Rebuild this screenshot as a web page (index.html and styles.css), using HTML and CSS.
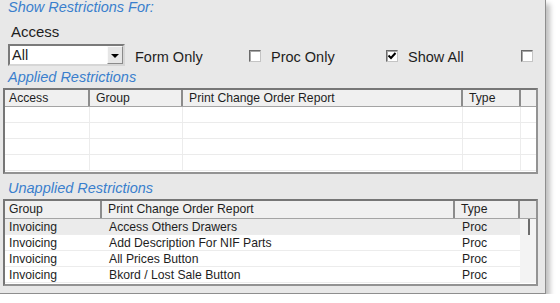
FILE: index.html
```html
<!DOCTYPE html>
<html lang="en">
<head>
    <meta charset="UTF-8">
    <title>Restrictions</title>
    <link rel="stylesheet" href="styles.css">
</head>
<body>
    <div class="panel">
        <div class="caption top">Show Restrictions For:</div>
        <div class="label">Access</div>
        <div class="options">
            <div class="combo">
                <span class="combo-text">All</span>
                <span class="combo-btn"><span class="arrow"></span></span>
            </div>
            <span class="opt first">Form Only</span>
            <span class="check"></span>
            <span class="opt">Proc Only</span>
            <span class="check">
                <svg width="10" height="10" viewBox="0 0 10 10"><path d="M1.5 4.5 L4 7 L8.5 2" fill="none" stroke="#000" stroke-width="2"/></svg>
            </span>
            <span class="opt wide">Show All</span>
            <span class="check"></span>
        </div>

        <div class="caption">Applied Restrictions</div>
        <div class="grid applied">
            <div class="row head">
                <div class="cell first">Access</div>
                <div class="cell">Group</div>
                <div class="cell">Print Change Order Report</div>
                <div class="cell">Type</div>
                <div class="cell last"></div>
            </div>
            <div class="body">
                <div class="row"><div class="cell"></div><div class="cell"></div><div class="cell"></div><div class="cell"></div><div class="cell last"></div></div>
                <div class="row"><div class="cell"></div><div class="cell"></div><div class="cell"></div><div class="cell"></div><div class="cell last"></div></div>
                <div class="row"><div class="cell"></div><div class="cell"></div><div class="cell"></div><div class="cell"></div><div class="cell last"></div></div>
                <div class="row"><div class="cell"></div><div class="cell"></div><div class="cell"></div><div class="cell"></div><div class="cell last"></div></div>
            </div>
        </div>

        <div class="caption second">Unapplied Restrictions</div>
        <div class="grid unapplied">
            <div class="row head">
                <div class="cell first">Group</div>
                <div class="cell">Print Change Order Report</div>
                <div class="cell">Type</div>
                <div class="cell blank"></div>
            </div>
            <div class="body">
                <div class="rows">
                    <div class="row sel"><div class="cell first">Invoicing</div><div class="cell">Access Others Drawers</div><div class="cell">Proc</div></div>
                    <div class="row"><div class="cell first">Invoicing</div><div class="cell">Add Description For NIF Parts</div><div class="cell">Proc</div></div>
                    <div class="row"><div class="cell first">Invoicing</div><div class="cell">All Prices Button</div><div class="cell">Proc</div></div>
                    <div class="row"><div class="cell first">Invoicing</div><div class="cell">Bkord / Lost Sale Button</div><div class="cell">Proc</div></div>
                </div>
                <div class="track"><div class="thumb"></div></div>
            </div>
        </div>
    </div>
</body>
</html>
```

FILE: styles.css
```css
body {
    margin: 0;
    background-color: #ffffff;
    font-family: 'Liberation Sans', Arial, sans-serif;
    color: #1e1e1e;
}

div.panel {
    width: 545px;
    height: 293px;
    overflow: hidden;
    background-color: #e8e8e8;
    border-right: 1px solid #8e8e8e;
    border-bottom: 1px solid #8e8e8e;
    box-shadow: 4px 4px 5px rgba(0, 0, 0, 0.25);
}

/* blue italic captions */
div.panel div.caption {
    font-size: 14.5px;
    line-height: 16px;
    font-style: italic;
    color: #3a7fcd;
    margin: 3px 0 0 8px;
}

div.panel div.caption.top {
    margin-top: -1px;
}

div.panel div.caption.second {
    margin-top: 6px;
}

div.panel div.label {
    font-size: 15px;
    line-height: 18px;
    margin: 8px 0 0 11px;
}

div.panel div.options {
    display: flex;
    align-items: center;
    height: 22px;
    margin-top: 3px;
    font-size: 14.5px;
}

div.options div.combo {
    display: flex;
    box-sizing: border-box;
    width: 117px;
    height: 22px;
    margin-left: 8px;
    background-color: #fff;
    border: 2px solid;
    border-color: #7a7a7a #d6d6d6 #d6d6d6 #7a7a7a;
}

div.options div.combo span.combo-text {
    flex: 1;
    padding-left: 2px;
    line-height: 18px;
}

div.options div.combo span.combo-btn {
    display: flex;
    align-items: center;
    justify-content: center;
    box-sizing: border-box;
    width: 16px;
    background-color: #e6e6e6;
    border: 1px solid;
    border-color: #fafafa #8a8a8a #8a8a8a #fafafa;
}

span.combo-btn span.arrow {
    width: 0;
    height: 0;
    border-left: 4px solid transparent;
    border-right: 4px solid transparent;
    border-top: 4px solid #000;
    margin-top: 1px;
}

div.options span.opt {
    width: 115px;
    margin-left: 10px;
    margin-top: 4px;
}

div.options span.opt.first {
    width: 114px;
}

div.options span.opt.wide {
    width: 113px;
}

div.options span.check {
    display: flex;
    align-items: center;
    justify-content: center;
    box-sizing: border-box;
    width: 12px;
    height: 12px;
    margin-top: 2px;
    background-color: #fff;
    border: 1px solid;
    border-color: #6a6a6a #c4c4c4 #c4c4c4 #6a6a6a;
    box-shadow: inset 1px 1px 0 #a8a8a8;
}

/* list grids */
div.grid {
    width: 535px;
    box-sizing: border-box;
    margin: 3px 0 0 3px;
    border: 2px solid #939393;
    border-top-color: #767676;
    border-left-color: #767676;
    background-color: #fff;
    font-size: 12.2px;
}

div.grid div.row {
    display: grid;
    box-sizing: border-box;
    height: 16px;
    line-height: 16px;
}

div.grid.applied div.row {
    grid-template-columns: 85px 93px 280px 58px 1fr;
}

div.grid.unapplied div.row {
    grid-template-columns: 97px 353px 65px 1fr;
}

div.grid.unapplied div.rows div.row {
    grid-template-columns: 97px 353px 65px;
}

div.grid div.cell {
    box-sizing: border-box;
    padding-left: 6px;
    white-space: nowrap;
    overflow: hidden;
}

div.grid div.row.head {
    height: 17px;
    background-color: #f0f0f0;
    border-bottom: 1px solid #a4a4a4;
}

div.grid.unapplied div.row.head {
    height: 18px;
    line-height: 17px;
}

div.grid div.row.head div.cell {
    border-right: 2px solid #8c8c8c;
}

div.grid div.row.head div.cell.first {
    padding-left: 4px;
}

div.grid div.row.head div.cell.last,
div.grid div.row.head div.cell.blank {
    border-right: none;
}

div.grid.unapplied div.row.head div.cell.blank {
    background-color: #e8e8e8;
}

div.grid div.body {
    padding-bottom: 1px;
}

div.grid.applied div.body div.row {
    border-bottom: 1px solid #ebebeb;
}

div.grid.applied div.body div.cell {
    border-right: 1px solid #ececec;
}

div.grid.applied div.body div.cell.last {
    border-right: none;
}

div.grid.unapplied div.body {
    display: flex;
}

div.grid.unapplied div.rows {
    width: 515px;
}

div.grid.unapplied div.rows div.row {
    border-bottom: 1px solid #ececec;
}

div.grid.unapplied div.rows div.row.sel {
    background-color: #ebebeb;
}

div.grid.unapplied div.rows div.cell {
    padding-left: 7px;
}

div.grid.unapplied div.rows div.cell.first {
    padding-left: 4px;
}

div.grid.unapplied div.track {
    flex: 1;
    background-color: #f3f3f3;
}

div.grid.unapplied div.thumb {
    width: 2px;
    height: 16px;
    margin-left: 8px;
    background-color: #6e6e6e;
}
```
